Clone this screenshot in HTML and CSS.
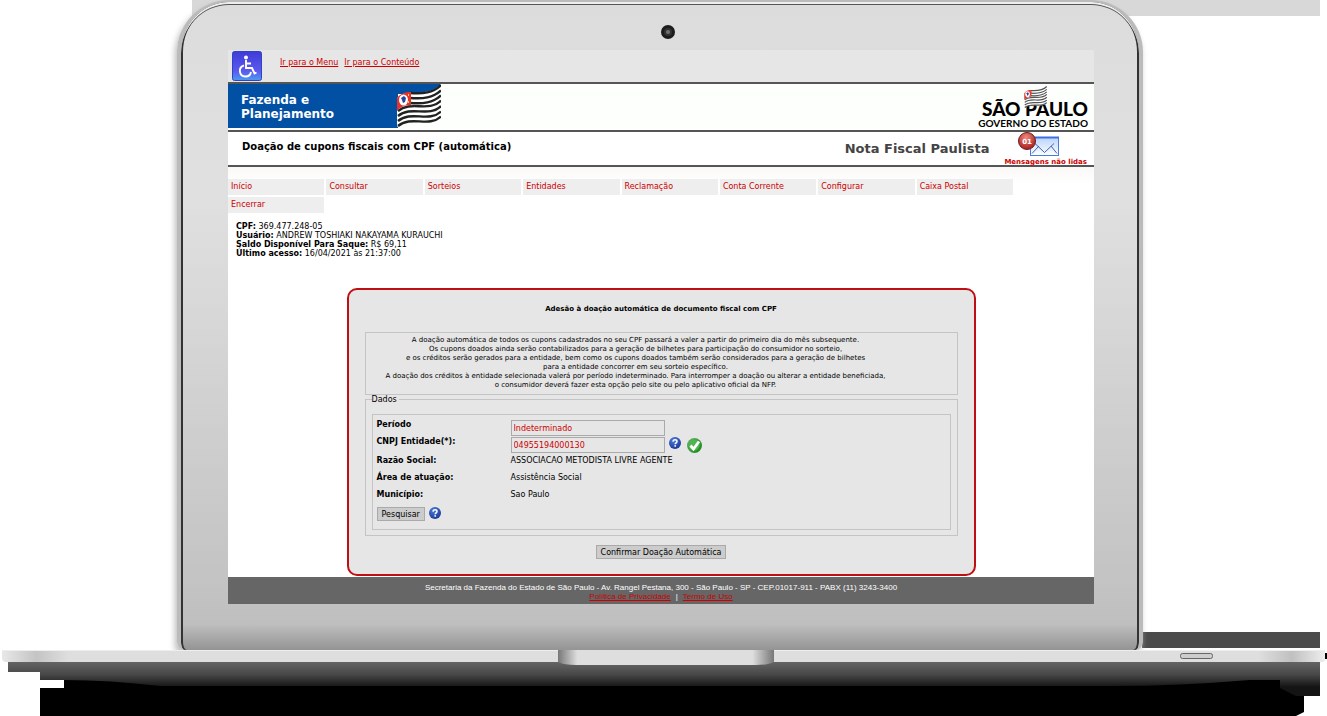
FILE: index.html
```html
<!DOCTYPE html>
<html lang="pt-BR">
<head>
<meta charset="utf-8">
<title>Nota Fiscal Paulista</title>
<link rel="stylesheet" href="styles.css">
</head>
<body>
<svg class="sprites" width="0" height="0" aria-hidden="true">
  <defs>
    <radialGradient id="blueBall" cx="40%" cy="30%" r="75%"><stop offset="0" stop-color="#4f7fe0"/><stop offset="1" stop-color="#173590"/></radialGradient>
    <linearGradient id="accessFill" x1="0" y1="0" x2="0" y2="1"><stop offset="0" stop-color="#3f3bd8"/><stop offset=".7" stop-color="#5c5cf0"/><stop offset="1" stop-color="#4a9df0"/></linearGradient>
    <linearGradient id="greenBall" x1="0" y1="0" x2="1" y2="1"><stop offset="0" stop-color="#6fae6f"/><stop offset="1" stop-color="#0d8a0d"/></linearGradient>
    <linearGradient id="paper" x1="0" y1="0" x2="0" y2="1"><stop offset="0" stop-color="#b9d3fb"/><stop offset="1" stop-color="#ffffff"/></linearGradient>
    <radialGradient id="redBall" cx="45%" cy="30%" r="70%"><stop offset="0" stop-color="#f08a80"/><stop offset="1" stop-color="#a81c1c"/></radialGradient>
    <symbol id="help" viewBox="0 0 12 12">
      <circle cx="6" cy="6" r="6" fill="url(#blueBall)"/>
      <path d="M4 4.600C4.100 3.200 5 2.700 6 2.700c1.200 0 2 .7 2 1.700C8 5.800 6.200 5.800 6.200 7.300" fill="none" stroke="#fff" stroke-width="1.500"/>
      <rect x="5.400" y="8.200" width="1.600" height="1.500" fill="#fff"/>
    </symbol>
    <symbol id="flag" viewBox="0 0 44 43">
      <path d="M0 14C14 4 30 14 44 0V33C32 44 14 30 0 43Z" fill="#fff"/>
      <g fill="none" stroke="currentColor" stroke-width="2.400">
        <path d="M13 9C26 10 36 9 44 1"/><path d="M13 14C26 15 36 14 44 6.500"/><path d="M13 19C26 20 36 19 44 11.500"/>
        <path d="M1 27C14 16 32 29 44 16.500"/><path d="M1 32C14 21 32 34 44 22"/><path d="M1 37C14 26 32 39 44 27.500"/><path d="M1 42C14 31 32 44 44 32.500"/>
      </g>
      <path d="M0 14C4 9 9 8 14 8V21C9 21 4 22 0 27Z" fill="#e5322a"/>
      <ellipse cx="6.500" cy="16" rx="4.500" ry="5.500" fill="#fff"/>
      <path d="M4 14l3-2 2 2-1 4-2 1-1-3Z" fill="#2447a0"/>
      <path d="M11.500 10v2M11.500 17v2" stroke="#ffd54a"/>
    </symbol>
  </defs>
</svg>
<div class="scene">
  <div class="lid">
    <div class="bezel">
      <svg class="camera" viewBox="0 0 14 14" aria-hidden="true"><circle cx="7" cy="7" r="7" fill="#1c1c1c"/><circle cx="7" cy="7" r="4" fill="#333"/><circle cx="7" cy="7" r="2" fill="#6b7478"/></svg>
    </div>
    <div class="screen">
      <nav class="skip" aria-label="Acessibilidade">
        <svg class="access" viewBox="0 0 30 30" role="img" aria-label="Acessibilidade">
          <rect x=".5" y=".5" width="29" height="29" rx="2" fill="url(#accessFill)" stroke="#2f43c4"/>
          <circle cx="14" cy="6.500" r="2" fill="#fff"/>
          <path d="M14 9V17H20L22.500 22.500L24.500 21.500M14 12.500H19M12 14.500A5.600 5.600 0 1 0 19 21" fill="none" stroke="#fff" stroke-width="1.900"/>
        </svg>
        <a href="#menu">Ir para o Menu</a>
        <a href="#conteudo">Ir para o Conteúdo</a>
      </nav>
      <header class="brand">
        <div class="agency">
          <span>Fazenda e<br>Planejamento</span>
          <svg class="agency-flag" viewBox="0 0 44 44"><path d="M0 0H44L40 4L28 10H0Z" fill="#0250a4"/><use href="#flag" width="44" height="43"/></svg>
        </div>
        <div class="state">
          <strong>SÃO PAULO</strong>
          <svg class="state-flag"><use href="#flag"/></svg>
          <span>GOVERNO DO ESTADO</span>
        </div>
      </header>
      <div class="titlebar">
        <h1>Doação de cupons fiscais com CPF (automática)</h1>
        <div class="product">Nota Fiscal Paulista</div>
        <a class="mail" href="#mensagens">
          <svg viewBox="0 0 42 26" aria-hidden="true">
            <rect x="12.500" y="5.500" width="28" height="18" fill="url(#paper)" stroke="#4a7be0"/>
            <path d="M12 5.500H41" stroke="#3d6fe0" stroke-width="2"/>
            <path d="M14 21.500l7-7.500M39 21.500l-6-7.500M17 11.500L26.500 20.500L36 11.500" fill="none" stroke="#4064b4"/>
            <circle cx="9" cy="9" r="8.500" fill="url(#redBall)" stroke="#6d1c1c"/>
            <text x="9" y="12" text-anchor="middle" class="count">01</text>
          </svg>
          <span>Mensagens não lidas</span>
        </a>
      </div>
      <nav class="menu" id="menu">
        <a href="#i">Início</a><a href="#c">Consultar</a><a href="#s">Sorteios</a><a href="#e">Entidades</a><a href="#r">Reclamação</a><a href="#cc">Conta Corrente</a><a href="#cf">Configurar</a><a href="#cp">Caixa Postal</a><a href="#x">Encerrar</a>
      </nav>
      <div class="user">
        <div><b>CPF:</b> 369.477.248-05</div>
        <div><b>Usuário:</b> ANDREW TOSHIAKI NAKAYAMA KURAUCHI</div>
        <div><b>Saldo Disponível Para Saque:</b> R$ 69,11</div>
        <div><b>Último acesso:</b> 16/04/2021 às 21:37:00</div>
      </div>
      <main class="card" id="conteudo">
        <h2>Adesão à doação automática de documento fiscal com CPF</h2>
        <p class="notice">A doação automática de todos os cupons cadastrados no seu CPF passará a valer a partir do primeiro dia do mês subsequente.<br>Os cupons doados ainda serão contabilizados para a geração de bilhetes para participação do consumidor no sorteio,<br>e os créditos serão gerados para a entidade, bem como os cupons doados também serão considerados para a geração de bilhetes<br>para a entidade concorrer em seu sorteio específico.<br>A doação dos créditos à entidade selecionada valerá por período indeterminado. Para interromper a doação ou alterar a entidade beneficiada,<br>o consumidor deverá fazer esta opção pelo site ou pelo aplicativo oficial da NFP.</p>
        <fieldset>
          <legend>Dados</legend>
          <div class="form">
            <div class="row"><label for="periodo">Período</label><input id="periodo" type="text" value="Indeterminado"></div>
            <div class="row tall"><label for="cnpj">CNPJ Entidade(*):</label><input id="cnpj" type="text" value="04955194000130">
              <svg class="help"><use href="#help"/></svg>
              <svg class="ok" viewBox="0 0 15 15" role="img" aria-label="Válido"><circle cx="7.500" cy="7.500" r="7.500" fill="url(#greenBall)"/><circle cx="7" cy="7" r="5.500" fill="#4fb54f"/><path d="M3.500 7.500L6.500 11L12 3.500" fill="none" stroke="#fff" stroke-width="2.800"/></svg>
            </div>
            <div class="row"><b>Razão Social:</b><span>ASSOCIACAO METODISTA LIVRE AGENTE</span></div>
            <div class="row"><b>Área de atuação:</b><span>Assistência Social</span></div>
            <div class="row"><b>Município:</b><span>Sao Paulo</span></div>
            <div class="search"><button type="button">Pesquisar</button><svg class="help"><use href="#help"/></svg></div>
          </div>
        </fieldset>
        <button class="confirm" type="button">Confirmar Doação Automática</button>
      </main>
      <footer>
        <div>Secretaria da Fazenda do Estado de São Paulo - Av. Rangel Pestana, 300 - São Paulo - SP - CEP.01017-911 - PABX (11) 3243-3400</div>
        <div><a href="#p">Política de Privacidade</a><i>|</i><a href="#t">Termo de Uso</a></div>
      </footer>
    </div>
  </div>
  <svg class="base" viewBox="0 0 1327 66" preserveAspectRatio="none" aria-hidden="true">
    <defs>
      <linearGradient id="under" gradientUnits="userSpaceOnUse" x1="0" y1="12" x2="0" y2="37"><stop offset="0" stop-color="#646464"/><stop offset=".5" stop-color="#484848"/><stop offset="1" stop-color="#141414"/></linearGradient>
      <linearGradient id="deck"><stop offset="0" stop-color="#e8e8e8"/><stop offset=".026" stop-color="#c4c4c4"/><stop offset=".05" stop-color="#dedede"/><stop offset=".95" stop-color="#dedede"/><stop offset=".975" stop-color="#c0c0c0"/><stop offset="1" stop-color="#eee"/></linearGradient>
      <linearGradient id="notch"><stop offset="0" stop-color="#777"/><stop offset=".09" stop-color="#dedede"/><stop offset=".9" stop-color="#dedede"/><stop offset="1" stop-color="#777"/></linearGradient>
    </defs>
    <path d="M40 38H64V30H1304V62L1296 66H40Z"/>
    <path d="M8 12H1320V46H1296L1280 38V30H1250Q1180 36 1110 36H160Q110 30 64 30H40V22H8Z" fill="url(#under)"/>
    <path d="M2 0H1325V10Q1325 12 1322 12H6Q2 12 2 8Z" fill="url(#deck)"/>
    <path d="M2 .5H1325" stroke="#eee"/>
    <path d="M1326 3V9" stroke="#000" stroke-width="2"/>
    <path d="M558 0H774V12Q768 15 756 15H576Q564 15 558 12Z" fill="url(#notch)"/>
    <rect x="1180.500" y="3.500" width="32" height="5" rx="2" fill="#ccc" stroke="#666"/>
  </svg>
</div>
</body>
</html>
```
FILE: styles.css
```css
* { box-sizing: border-box; }
body { margin: 0; background: #fff; color: #000; font: 8px/9px "DejaVu Sans", Verdana, sans-serif; }
a { color: #c00; }
h1, h2, p { margin: 0; }
.sprites { position: absolute; }
.scene {
  background:
    linear-gradient(#d8d8d8, #d8d8d8) right 7px top 0 / calc(100% - 199px) 16px no-repeat,
    linear-gradient(#4b4b4b, #4b4b4b) right 7px top 632px / 178px 16px no-repeat;
}
.lid {
  margin: 0 184px 0 177px;
  padding: 0 45px 46px 47px;
  border: solid #bbb;
  border-width: 2px 4px 0 4px;
  border-radius: 52px 52px 8px 8px;
  background: linear-gradient(#dcdcdc, #e0e0e0 30%, #c3c3c3 90%, #bfbfbf 96%, #949494);
  box-shadow: inset 0 2px 0 #eee, inset 2px 0 0 #333, inset -2px 0 0 #333, inset 0 3px 0 #555, -2px 4px 6px #bbb;
}
.bezel { height: 48px; padding: 23px 0 0 14px; text-align: center; }
.camera { width: 14px; height: 14px; }
.screen { background: #fff; }
.skip { display: flex; height: 32px; padding: 1px 4px; background: #e6e6e6; }
.skip a { margin-top: 7px; }
.skip a + a { margin-left: 6px; }
.access { width: 30px; height: 30px; margin-right: 18px; }
.brand { display: flex; justify-content: space-between; height: 50px; border: solid #555; border-width: 2px 0; background: #fdfffd; }
.agency { display: flex; justify-content: space-between; width: 213px; height: 44px; padding-left: 13px; background: linear-gradient(#0250a4, #0250a4) 0 0 / 170px 100% no-repeat; color: #fff; font-weight: bold; font-size: 12px; line-height: 14px; }
.agency span { padding-top: 9px; }
.agency-flag { width: 44px; height: 44px; color: #222; }
.state { position: relative; display: flex; flex-direction: column; align-items: flex-end; padding: 16px 6px 0 0; font-family: Lato, sans-serif; }
.state strong { font-size: 19px; line-height: 18px; font-weight: 900; }
.state span { font-size: 10px; line-height: 10px; font-weight: 700; }
.state-flag { position: absolute; right: 46px; top: 2px; width: 25px; height: 22px; color: #555; }
.titlebar { display: flex; height: 35px; padding: 0 7px 0 14px; border-bottom: 2px solid #555; }
.titlebar h1 { flex: 1; padding-top: 8px; font-size: 10px; line-height: 14px; }
.product { margin-right: 15px; padding-top: 8px; color: #444; font-weight: bold; font-size: 13px; line-height: 18px; }
.mail { display: flex; flex-direction: column; align-items: center; font-weight: bold; font-size: 7px; text-decoration: none; }
.mail svg { width: 42px; height: 26px; margin-right: 14px; flex: none; }
.mail span { line-height: 8px; }
.count { fill: #fff; font-size: 7px; }
.menu { display: grid; grid-template-columns: repeat(8, 1fr); gap: 2px; padding: 12px 81px 0 0; background: linear-gradient(#faf8f6, #fff 16px); }
.menu a { padding: 4px 3px; height: 16px; line-height: 8px; background: #eee; text-decoration: none; }
.user { padding: 9px 8px 0; }
.card { width: 629px; max-width: 100%; margin: 30px auto 1px; padding: 15px 16px; border: 2px solid #c00f12; border-radius: 10px; background: #e6e6e6; }
.card h2 { font-size: 7px; line-height: 9px; text-align: center; }
.notice { margin-top: 18px; padding: 3px 54px 4px 3px; border: 1px solid #c4c4c4; font-size: 7px; text-align: center; }
fieldset { margin: 0; padding: 10px 6px 5px; border: 1px solid #c4c4c4; }
legend { padding: 0 2px 0 0; }
.form { padding: 5px 4px 8px; border: 1px solid #c4c4c4; }
.row { display: flex; height: 17px; }
.tall { height: 19px; }
.row label, .row b { width: 134px; font-weight: bold; }
input { width: 154px; height: 16px; padding: 0 2px; border: 1px solid #aaa; background: #e6e6e6; color: #c00; font: inherit; }
.help { width: 12px; height: 12px; margin-left: 4px; }
.ok { width: 15px; height: 15px; margin: 1px 0 0 6px; }
.search { display: flex; }
button { height: 14px; padding: 0 4px; border: 1px solid #aaa; background: #ccc; color: #000; font: inherit; }
.confirm { display: block; margin: 9px auto 0; }
footer { padding: 6px 0 3px; background: #666; color: #fff; text-align: center; font-family: "Liberation Sans", Arial, sans-serif; }
footer i { margin: 0 5px; font-style: normal; }
.base { display: block; width: 100%; height: 66px; }
```
